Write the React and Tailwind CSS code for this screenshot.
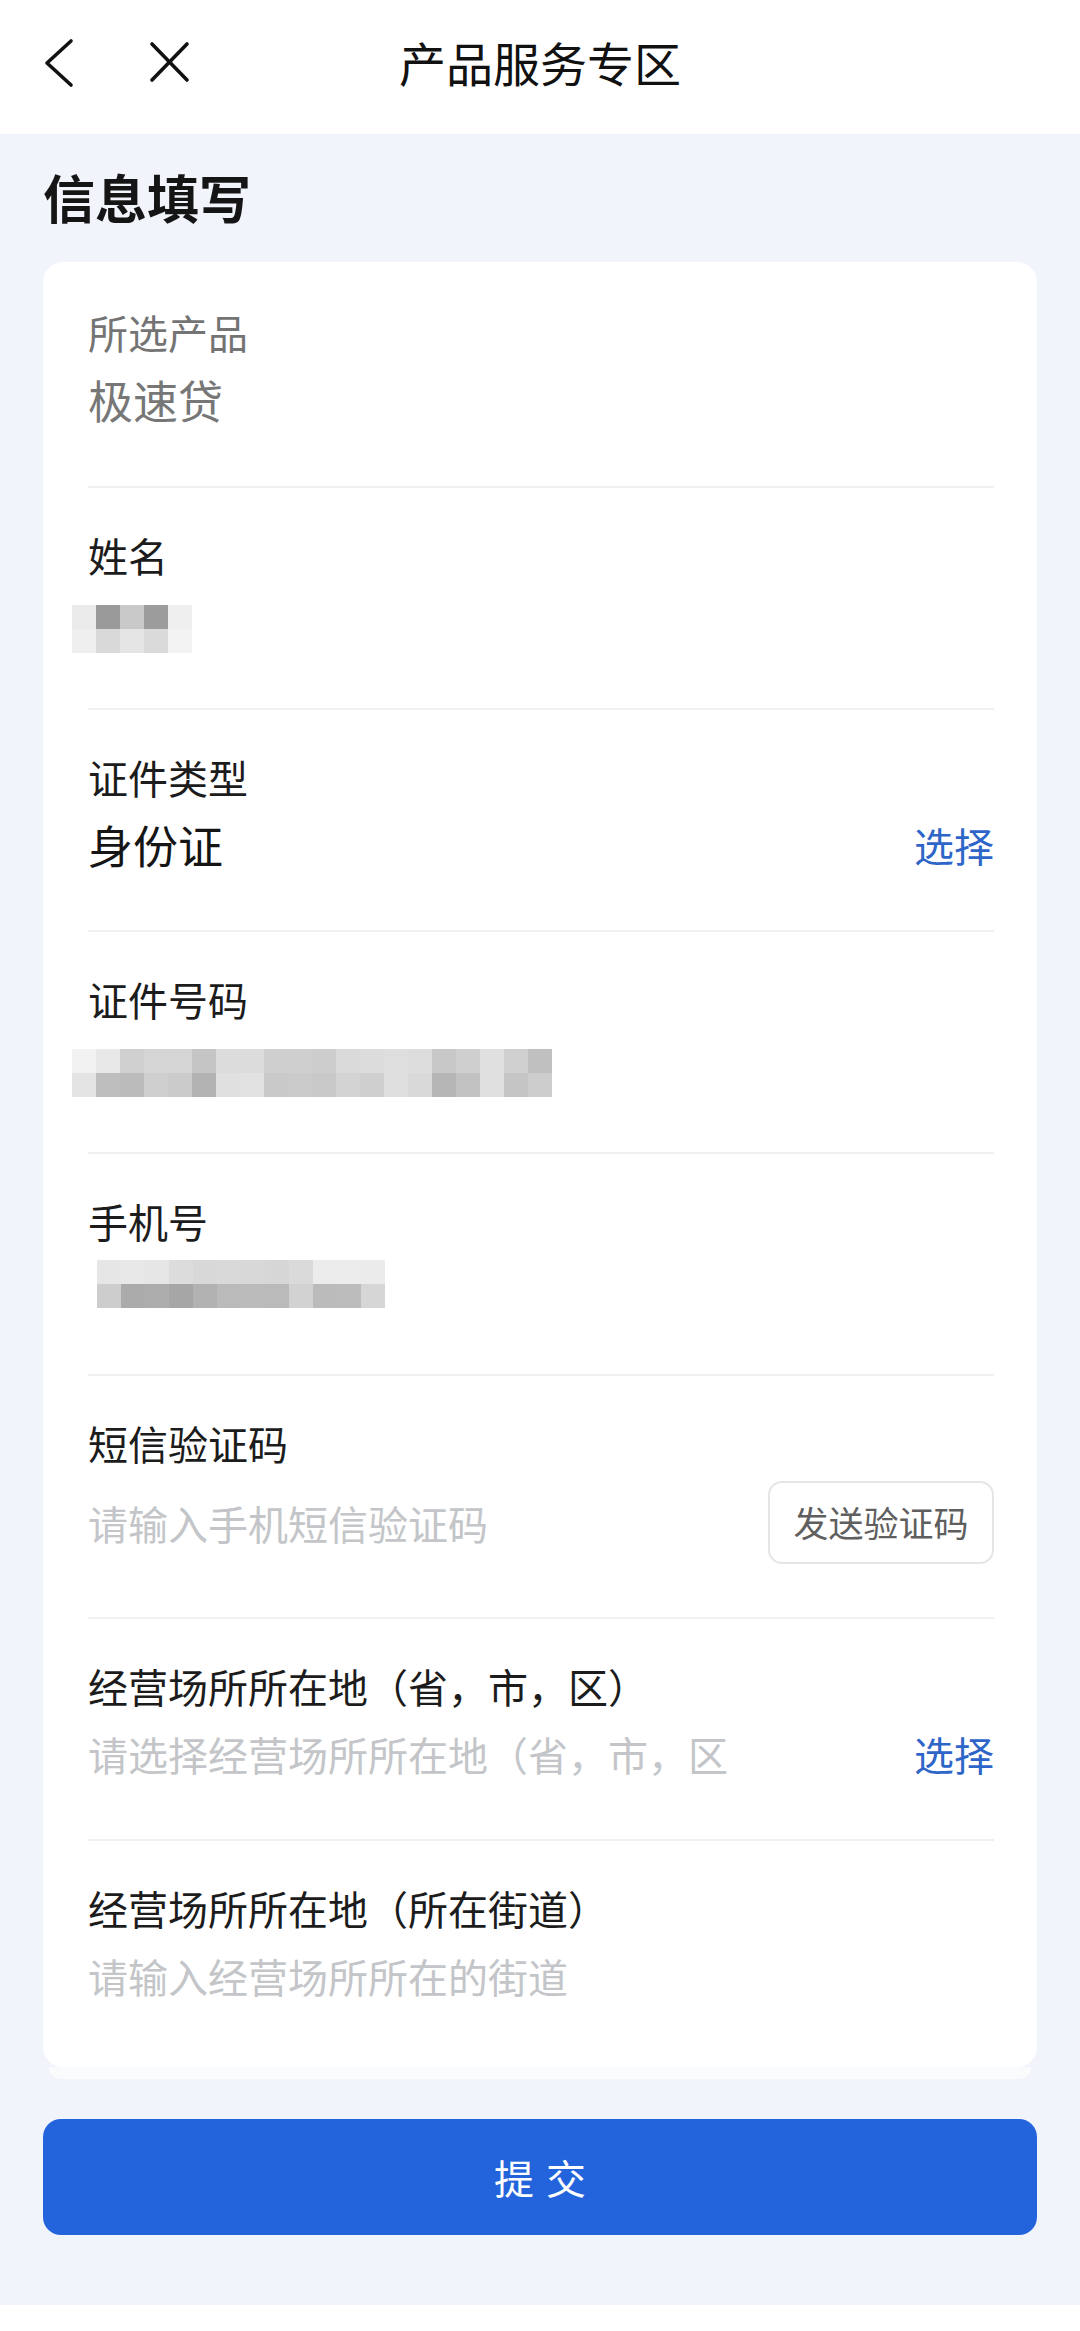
import React from "react";

const nameMosaic = [
  ["bg-[#ebebeb]", "bg-[#9a9a9a]", "bg-[#c9c9c9]", "bg-[#9c9c9c]", "bg-[#efefef]"],
  ["bg-[#efefef]", "bg-[#d9d9d9]", "bg-[#e5e5e5]", "bg-[#dadada]", "bg-[#f3f3f3]"],
];

const idMosaic = [
  [
    "bg-[#f2f2f2]", "bg-[#e8e8e8]", "bg-[#d0d0d0]", "bg-[#d5d5d5]", "bg-[#d5d5d5]",
    "bg-[#c5c5c5]", "bg-[#dcdcdc]", "bg-[#dcdcdc]", "bg-[#cfcfcf]", "bg-[#cfcfcf]",
    "bg-[#cdcdcd]", "bg-[#dadada]", "bg-[#dcdcdc]", "bg-[#dedede]", "bg-[#dddddd]",
    "bg-[#c8c8c8]", "bg-[#cfcfcf]", "bg-[#e0e0e0]", "bg-[#d0d0d0]", "bg-[#c0c0c0]",
  ],
  [
    "bg-[#e4e4e4]", "bg-[#bebebe]", "bg-[#bbbbbb]", "bg-[#cfcfcf]", "bg-[#cbcbcb]",
    "bg-[#b3b3b3]", "bg-[#e0e0e0]", "bg-[#e2e2e2]", "bg-[#c9c9c9]", "bg-[#cbcbcb]",
    "bg-[#c9c9c9]", "bg-[#d3d3d3]", "bg-[#cfcfcf]", "bg-[#dedede]", "bg-[#d9d9d9]",
    "bg-[#b6b6b6]", "bg-[#c2c2c2]", "bg-[#e0e0e0]", "bg-[#c5c5c5]", "bg-[#cdcdcd]",
  ],
];

const phoneMosaic = [
  [
    "bg-[#e6e6e6]", "bg-[#e8e8e8]", "bg-[#e6e6e6]", "bg-[#dcdcdc]", "bg-[#d8d8d8]", "bg-[#d9d9d9]",
    "bg-[#d8d8d8]", "bg-[#d6d6d6]", "bg-[#dadada]", "bg-[#ececec]", "bg-[#ececec]", "bg-[#ebebeb]",
  ],
  [
    "bg-[#cdcdcd]", "bg-[#ababab]", "bg-[#adadad]", "bg-[#a6a6a6]", "bg-[#b2b2b2]", "bg-[#bababa]",
    "bg-[#bbbbbb]", "bg-[#bababa]", "bg-[#d2d2d2]", "bg-[#bbbbbb]", "bg-[#bcbcbc]", "bg-[#d6d6d6]",
  ],
];

// Blurred (pixelated) personal data
function Mosaic({ rows, className }) {
  return (
    <div className={`flex flex-col ${className}`}>
      {rows.map((row, i) => (
        <div key={i} className="flex">
          {row.map((c, j) => (
            <div key={j} className={`w-[24px] h-[24px] ${c}`}></div>
          ))}
        </div>
      ))}
    </div>
  );
}

function Row({ label, labelGray, children, last, first }) {
  return (
    <div
      className={`${first ? "pt-[45px]" : "pt-[42px]"} ${
        last ? "pb-[63px]" : first ? "pb-[58px] border-b-2 border-[#f0f0f0]" : "pb-[57px] border-b-2 border-[#f0f0f0]"
      }`}
    >
      <div
        className={`text-[40px] leading-[50px] ${
          labelGray ? "text-[#747474]" : "text-[#1c1c1c]"
        }`}
      >
        {label}
      </div>
      <div className="mt-[15px] h-[56px] flex items-center justify-between">
        {children}
      </div>
    </div>
  );
}

export default function App() {
  return (
    <div className="w-[1080px] h-[2331px] flex flex-col bg-white font-['Noto_Sans_CJK_SC','Noto_Sans',sans-serif]">
      {/* Header */}
      <div className="h-[134px] shrink-0 bg-white grid grid-cols-[1fr_auto_1fr] items-start">
        <div className="flex items-start pl-[43px] pt-[38px]">
          <svg width="32" height="50" viewBox="0 0 32 50" fill="none">
            <polyline
              points="28,3 4,25 28,47"
              stroke="#111"
              strokeWidth="3.6"
              strokeLinecap="round"
              strokeLinejoin="round"
            />
          </svg>
          <svg width="44" height="44" viewBox="0 0 44 44" fill="none" className="ml-[72px] mt-[2px]">
            <line x1="5" y1="4" x2="40" y2="40" stroke="#111" strokeWidth="3.6" strokeLinecap="round" />
            <line x1="40" y1="4" x2="5" y2="40" stroke="#111" strokeWidth="3.6" strokeLinecap="round" />
          </svg>
        </div>
        <div className="pt-[34px] text-[47px] leading-[56px] text-[#111]">产品服务专区</div>
        <div></div>
      </div>

      {/* Body */}
      <div className="flex-1 bg-[#f1f5fb] px-[43px] flex flex-col">
        <div className="pt-[32px] text-[52px] leading-[62px] font-bold text-[#151515]">信息填写</div>

        <div className="mt-[34px] bg-white rounded-[20px] pl-[45px] pr-[43px]">
          <Row label="所选产品" labelGray first>
            <span className="text-[45px] text-[#777777]">极速贷</span>
          </Row>

          <Row label="姓名">
            <Mosaic rows={nameMosaic} className="-ml-[16px] mt-[12px]" />
          </Row>

          <Row label="证件类型">
            <span className="text-[45px] text-[#151515]">身份证</span>
            <span className="text-[40px] text-[#2e65c8]">选择</span>
          </Row>

          <Row label="证件号码">
            <Mosaic rows={idMosaic} className="-ml-[16px] mt-[12px]" />
          </Row>

          <Row label="手机号">
            <Mosaic rows={phoneMosaic} className="ml-[9px] -mt-[10px]" />
          </Row>

          {/* SMS code row */}
          <div className="pt-[42px] pb-[53px] border-b-2 border-[#f0f0f0]">
            <div className="text-[40px] leading-[50px] text-[#1c1c1c]">短信验证码</div>
            <div className="mt-[13px] flex items-center justify-between">
              <span className="text-[40px] text-[#c3c5c8]">请输入手机短信验证码</span>
              <button className="w-[226px] h-[83px] rounded-[14px] border-2 border-[#e6e6e6] bg-white text-[35px] text-[#5f5f5f] flex items-center justify-center">
                发送验证码
              </button>
            </div>
          </div>

          <Row label="经营场所所在地（省，市，区）">
            <span className="text-[40px] text-[#c3c5c8]">请选择经营场所所在地（省，市，区</span>
            <span className="text-[40px] text-[#2e65c8]">选择</span>
          </Row>

          <Row label="经营场所所在地（所在街道）" last>
            <span className="text-[40px] text-[#c3c5c8]">请输入经营场所所在的街道</span>
          </Row>
        </div>
        <div className="mx-[6px] h-[12px] rounded-b-[16px] bg-[#f9fbfd]"></div>

        <button className="mt-[40px] h-[116px] w-full rounded-[18px] bg-[#2364dc] text-white text-[40px] tracking-[12px] pl-[12px] flex items-center justify-center">
          提交
        </button>
      </div>

      <div className="h-[26px] shrink-0 bg-white"></div>
    </div>
  );
}
